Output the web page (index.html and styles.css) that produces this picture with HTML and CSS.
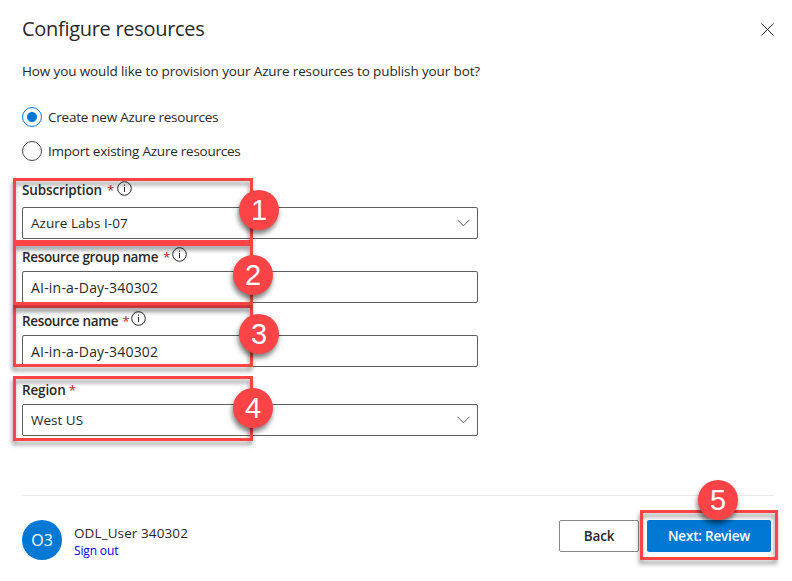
FILE: index.html
```html
<!DOCTYPE html>
<html lang="en">
<head>
<meta charset="utf-8">
<title>Configure resources</title>
<link rel="stylesheet" href="styles.css">
</head>
<body>
<main class="dialog">
  <header class="head">
    <h1 class="title"><span>Configure resources</span></h1>
    <svg class="close" width="13" height="13" viewBox="0 0 13 13"><path d="M.5.5l12 12M12.5.5l-12 12"/></svg>
  </header>
  <p class="intro">How you would like to provision your Azure resources to publish your bot?</p>
  <div class="radios">
    <div class="radio checked"><i class="dot"></i><span class="t-create">Create new Azure resources</span></div>
    <div class="radio"><i class="dot"></i><span class="t-import">Import existing Azure resources</span></div>
  </div>
  <section class="form">
    <div class="field f-sub">
      <div class="label"><span class="t-sub">Subscription</span><b class="req">*</b><svg class="info" width="15" height="15" viewBox="0 0 15 15"><circle cx="7.5" cy="7.5" r="6.8"/><path d="M7.5 6v5M7.5 3.5v1.2"/></svg></div>
      <div class="input"><span class="t-azure">Azure Labs I-07</span><svg class="chev" width="13" height="8" viewBox="0 0 13 8"><path d="M.5.8l6 6 6-6"/></svg></div>
    </div>
    <div class="field f-group">
      <div class="label"><span class="t-group">Resource group name</span><b class="req">*</b><svg class="info" width="15" height="15" viewBox="0 0 15 15"><circle cx="7.5" cy="7.5" r="6.8"/><path d="M7.5 6v5M7.5 3.5v1.2"/></svg></div>
      <div class="input"><span class="t-ai">AI-in-a-Day-340302</span></div>
    </div>
    <div class="field f-name">
      <div class="label"><span class="t-name">Resource name</span><b class="req">*</b><svg class="info" width="15" height="15" viewBox="0 0 15 15"><circle cx="7.5" cy="7.5" r="6.8"/><path d="M7.5 6v5M7.5 3.5v1.2"/></svg></div>
      <div class="input"><span class="t-ai">AI-in-a-Day-340302</span></div>
    </div>
    <div class="field f-region">
      <div class="label"><span class="t-region">Region</span><b class="req">*</b></div>
      <div class="input"><span class="t-west">West US</span><svg class="chev" width="13" height="8" viewBox="0 0 13 8"><path d="M.5.8l6 6 6-6"/></svg></div>
    </div>
  </section>
  <footer class="foot">
    <div class="avatar"><span>O3</span></div>
    <div class="user"><span class="t-user">ODL_User 340302</span><a class="t-sign">Sign out</a></div>
    <div class="btn back"><span>Back</span></div>
    <div class="btn next"><span>Next: Review</span></div>
  </footer>
</main>
<div class="mark m4"></div>
<div class="mark m3"></div>
<div class="mark m1"></div>
<div class="mark m2"></div>
<div class="mark m5"></div>
<div class="badge b1">1</div>
<div class="badge b2">2</div>
<div class="badge b3">3</div>
<div class="badge b4">4</div>
<div class="badge b5">5</div>
</body>
</html>
```
FILE: styles.css
```css
* { box-sizing: border-box; }
body {
  margin: 0;
  position: relative;
  width: 792px;
  height: 581px;
  overflow: hidden;
  background: #fff;
  color: #292827;
  font: 13.5px/20px "Open Sans", "Noto Sans", sans-serif;
  white-space: nowrap;
}
.dialog { display: flex; flex-direction: column; height: 581px; padding: 15px 17px 0 22px; }
.head { display: flex; justify-content: space-between; height: 28px; }
.title { margin: 0; font-size: 20px; line-height: 28px; font-weight: 500; letter-spacing: -.3px; }
.close { margin: 8px 1px 0 0; stroke: #292827; stroke-width: 1; fill: none; }
.intro { margin: 18px 0 0; height: 20px; letter-spacing: -.12px; }
.radios { display: flex; flex-direction: column; gap: 14px; margin-top: 26px; }
.radio { display: flex; align-items: center; gap: 6px; height: 20px; letter-spacing: -.24px; }
.dot { width: 20px; height: 20px; border: 1px solid #4a4a4a; border-radius: 50%; }
.checked .dot { border-color: #0078d4; background: radial-gradient(circle, #0078d4 4.6px, transparent 5.4px); }
.form { width: 456px; margin-top: 19px; }
.field { display: flex; flex-direction: column; }
.label { display: flex; height: 27px; line-height: 21px; font-weight: 600; letter-spacing: -.35px; }
.t-sub, .t-region { letter-spacing: -.14px; }
.f-group .label, .f-name .label { height: 25px; line-height: 22px; }
.f-group, .f-name { margin-top: 7px; }
.f-region { margin-top: 13px; }
.f-region .label { height: 24px; }
.req { margin-left: 5px; color: #b3262b; font-weight: 400; }
.f-region .req { margin-left: 3px; }
.info { margin: 1px 0 0 3px; fill: none; stroke: #292827; stroke-width: 1; }
.f-group .info { margin: 1px 0 0 2px; }
.f-name .req { margin-left: 4px; }
.f-name .info { margin: 1px 0 0 2px; }
.input { display: flex; align-items: center; justify-content: space-between; height: 32px; padding: 0 7px 0 8px; border: 1px solid #605e5c; border-radius: 2px; letter-spacing: 0; }
.t-azure { letter-spacing: .04px; }
.t-ai { font-size: 14px; letter-spacing: .2px; margin-top: 2px; }
.chev { fill: none; stroke: #605e5c; stroke-width: 1; }
.foot { display: flex; align-items: flex-start; height: 66px; width: 753px; margin-top: 59px; padding: 24px 4px 0 0; border-top: 1px solid #eaeaea; }
.avatar { display: flex; align-items: center; justify-content: center; width: 40px; height: 40px; border-radius: 50%; background: #0078d4; color: #fff; font-size: 16px; font-weight: 500; }
.user { display: flex; flex-direction: column; width: 120px; margin: 3px auto 0 12px; }
.t-user { letter-spacing: .1px; }
.t-sign { margin-top: -1px; font-size: 12px; line-height: 17px; color: #00f; letter-spacing: -.15px; }
.btn { display: flex; align-items: center; justify-content: center; height: 32px; border-radius: 2px; font-weight: 600; letter-spacing: -.2px; }
.back { width: 80px; border: 1px solid #8a8886; }
.next { width: 124px; margin-left: 8px; background: #0078d4; color: #fff; }
.mark { position: absolute; left: 13px; width: 240px; border: 3px solid #fc4346; filter: drop-shadow(-1px 4px 2px rgba(0,0,0,.4)); }
.m1 { top: 178px; height: 65px; }
.m2 { top: 243px; height: 62px; }
.m3 { top: 305px; height: 62px; }
.m4 { top: 376px; height: 65px; }
.m5 { left: 640px; top: 510px; width: 138px; height: 50px; }
.badge { position: absolute; width: 40px; height: 40px; border-radius: 50%; background: #fc4346; color: #fff; font: 29px/41px "Liberation Sans", sans-serif; text-align: center; box-shadow: -1px 4px 5px rgba(0,0,0,.5); }
.b1 { left: 239px; top: 190px; }
.b2 { left: 233px; top: 255px; }
.b3 { left: 239px; top: 314px; }
.b4 { left: 233px; top: 388px; }
.b5 { left: 698px; top: 480px; }
```
